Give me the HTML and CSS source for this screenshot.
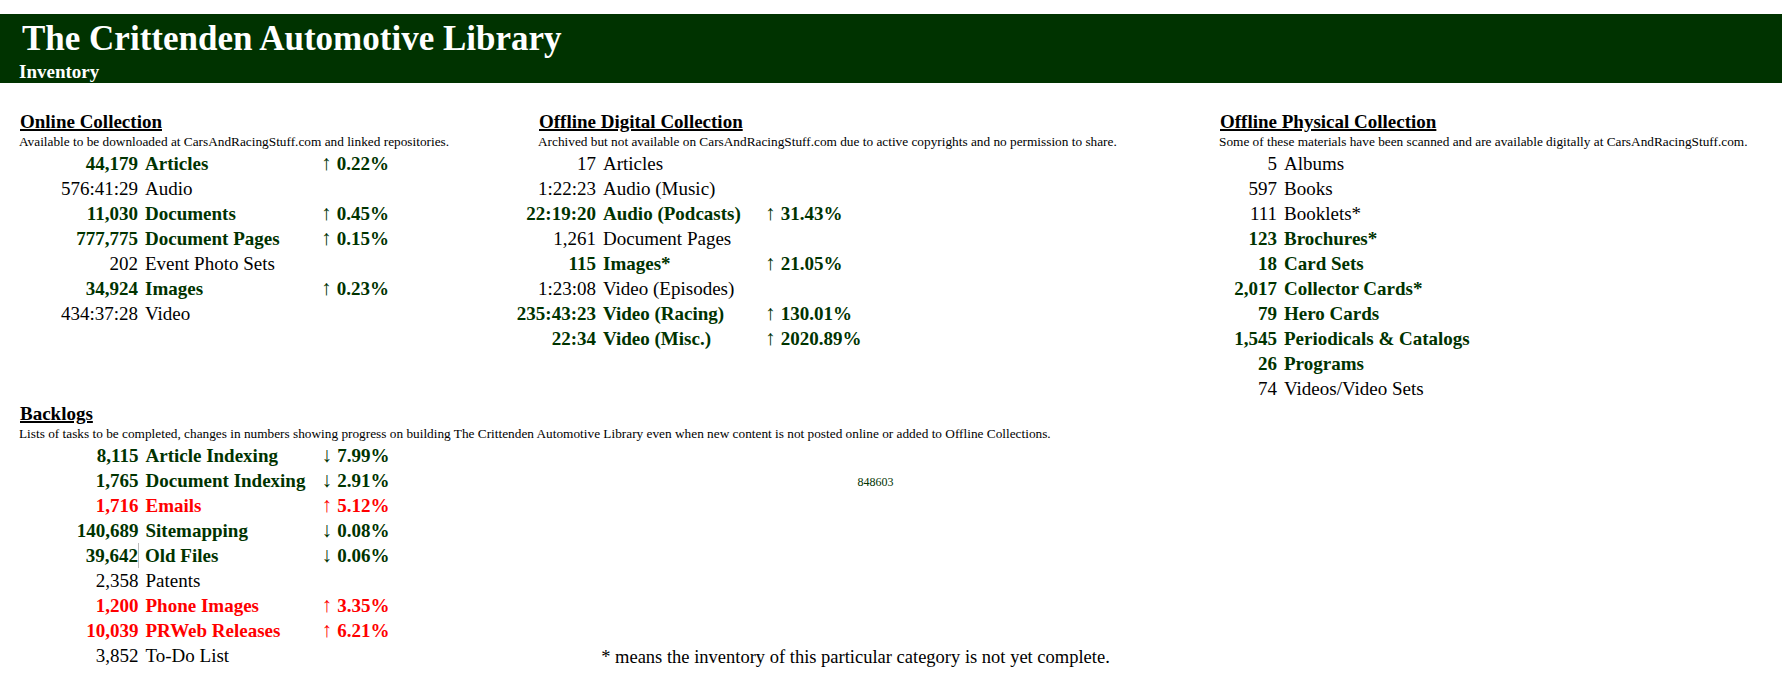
FILE: index.html
```html
<!DOCTYPE html>
<html lang="en">
<head>
<meta charset="UTF-8">
<title>The Crittenden Automotive Library - Inventory</title>
<link rel="stylesheet" href="styles.css">
</head>
<body>

<div class="banner">
<div class="site-name">The Crittenden Automotive Library</div>
<div class="page-name">Inventory</div>
</div>

<div class="collections">

<div class="online">
<h2>Online Collection</h2>
<p class="blurb">Available to be downloaded at CarsAndRacingStuff.com and linked repositories.</p>
<table class="wide">
<tr class="up"><td class="num">44,179</td><td class="name">Articles</td><td class="change"><span class="arrow">↑</span> 0.22%</td></tr>
<tr><td class="num">576:41:29</td><td class="name">Audio</td><td class="change"></td></tr>
<tr class="up"><td class="num">11,030</td><td class="name">Documents</td><td class="change"><span class="arrow">↑</span> 0.45%</td></tr>
<tr class="up"><td class="num">777,775</td><td class="name">Document Pages</td><td class="change"><span class="arrow">↑</span> 0.15%</td></tr>
<tr><td class="num">202</td><td class="name">Event Photo Sets</td><td class="change"></td></tr>
<tr class="up"><td class="num">34,924</td><td class="name">Images</td><td class="change"><span class="arrow">↑</span> 0.23%</td></tr>
<tr><td class="num">434:37:28</td><td class="name">Video</td><td class="change"></td></tr>
</table>
</div>

<div class="digital">
<h2>Offline Digital Collection</h2>
<p class="blurb">Archived but not available on CarsAndRacingStuff.com due to active copyrights and no permission to share.</p>
<table class="narrow">
<tr><td class="num">17</td><td class="name">Articles</td><td class="change"></td></tr>
<tr><td class="num">1:22:23</td><td class="name">Audio (Music)</td><td class="change"></td></tr>
<tr class="up"><td class="num">22:19:20</td><td class="name">Audio (Podcasts)</td><td class="change"><span class="arrow">↑</span> 31.43%</td></tr>
<tr><td class="num">1,261</td><td class="name">Document Pages</td><td class="change"></td></tr>
<tr class="up"><td class="num">115</td><td class="name">Images*</td><td class="change"><span class="arrow">↑</span> 21.05%</td></tr>
<tr><td class="num">1:23:08</td><td class="name">Video (Episodes)</td><td class="change"></td></tr>
<tr class="up"><td class="num">235:43:23</td><td class="name">Video (Racing)</td><td class="change"><span class="arrow">↑</span> 130.01%</td></tr>
<tr class="up"><td class="num">22:34</td><td class="name">Video (Misc.)</td><td class="change"><span class="arrow">↑</span> 2020.89%</td></tr>
</table>
</div>

<div class="physical">
<h2>Offline Physical Collection</h2>
<p class="blurb">Some of these materials have been scanned and are available digitally at CarsAndRacingStuff.com.</p>
<table class="short">
<tr><td class="num">5</td><td class="name">Albums</td></tr>
<tr><td class="num">597</td><td class="name">Books</td></tr>
<tr><td class="num">111</td><td class="name">Booklets*</td></tr>
<tr class="up"><td class="num">123</td><td class="name">Brochures*</td></tr>
<tr class="up"><td class="num">18</td><td class="name">Card Sets</td></tr>
<tr class="up"><td class="num">2,017</td><td class="name">Collector Cards*</td></tr>
<tr class="up"><td class="num">79</td><td class="name">Hero Cards</td></tr>
<tr class="up"><td class="num">1,545</td><td class="name">Periodicals &amp; Catalogs</td></tr>
<tr class="up"><td class="num">26</td><td class="name">Programs</td></tr>
<tr><td class="num">74</td><td class="name">Videos/Video Sets</td></tr>
</table>
</div>

</div>

<div class="backlogs">
<h2>Backlogs</h2>
<p class="blurb">Lists of tasks to be completed, changes in numbers showing progress on building The Crittenden Automotive Library even when new content is not posted online or added to Offline Collections.</p>
<div class="backlog-row">
<table class="wide">
<tr class="up"><td class="num">8,115</td><td class="name">Article Indexing</td><td class="change"><span class="arrow">↓</span> 7.99%</td></tr>
<tr class="up"><td class="num">1,765</td><td class="name">Document Indexing</td><td class="change"><span class="arrow">↓</span> 2.91%</td></tr>
<tr class="bad"><td class="num">1,716</td><td class="name">Emails</td><td class="change"><span class="arrow">↑</span> 5.12%</td></tr>
<tr class="up"><td class="num">140,689</td><td class="name">Sitemapping</td><td class="change"><span class="arrow">↓</span> 0.08%</td></tr>
<tr class="up"><td class="num">39,642</td><td class="name ruled">Old Files</td><td class="change"><span class="arrow">↓</span> 0.06%</td></tr>
<tr><td class="num">2,358</td><td class="name">Patents</td><td class="change"></td></tr>
<tr class="bad"><td class="num">1,200</td><td class="name">Phone Images</td><td class="change"><span class="arrow">↑</span> 3.35%</td></tr>
<tr class="bad"><td class="num">10,039</td><td class="name">PRWeb Releases</td><td class="change"><span class="arrow">↑</span> 6.21%</td></tr>
<tr><td class="num">3,852</td><td class="name">To-Do List</td><td class="change"></td></tr>
</table>
<div class="side">
<div class="counter">848603</div>
<div class="footnote">* means the inventory of this particular category is not yet complete.</div>
</div>
</div>
</div>

</body>
</html>
```

FILE: styles.css
```css
body{
margin:0;
padding-top:14px;
background:white;
color:black;
font-family:"Liberation Serif","Times New Roman",serif;
font-size:19px;
}

.banner{
height:69px;
box-sizing:border-box;
padding:5px 0 0 19px;
background:#003300;
color:white;
font-weight:bold;
}

.site-name{
font-size:35px;
line-height:40px;
padding-left:3px;
}

.page-name{
padding-top:3px;
font-size:19px;
line-height:20px;
}

.collections{
display:grid;
grid-template-columns:519px 681px 1fr;
height:292px;
padding:28px 0 0 19px;
}

h2{
margin:0;
padding-left:1px;
font-size:19px;
line-height:22px;
text-decoration:underline;
text-decoration-thickness:2px;
}

.blurb{
margin:0;
font-size:13.3px;
line-height:18px;
}

table{
border-collapse:collapse;
}

td{
padding:0;
height:25px;
white-space:nowrap;
}

.num{
text-align:right;
}

.name{
padding-left:7px;
}

.wide .num{width:119px;}
.wide .name{width:176px;}

.narrow{
margin-left:-26px;
}
.narrow .num{width:84px;}
.narrow .name{width:162px;}

.short .num{width:58px;}

.arrow{
display:inline-block;
width:11px;
font-size:21px;
line-height:20px;
font-weight:normal;
}

.up{
color:#003300;
font-weight:bold;
}

.bad{
color:red;
font-weight:bold;
}

.ruled{
border-left:1px solid #bbb;
padding-left:6px;
}

.backlogs{
padding-left:19px;
}

.backlog-row{
display:flex;
}

.side{
width:952px;
margin-left:10px;
}

.counter{
margin-top:29px;
font-size:12px;
line-height:20px;
text-align:center;
color:#003300;
}

.footnote{
margin-top:155px;
padding-right:40px;
text-align:center;
font-size:18.5px;
line-height:21px;
}
```
